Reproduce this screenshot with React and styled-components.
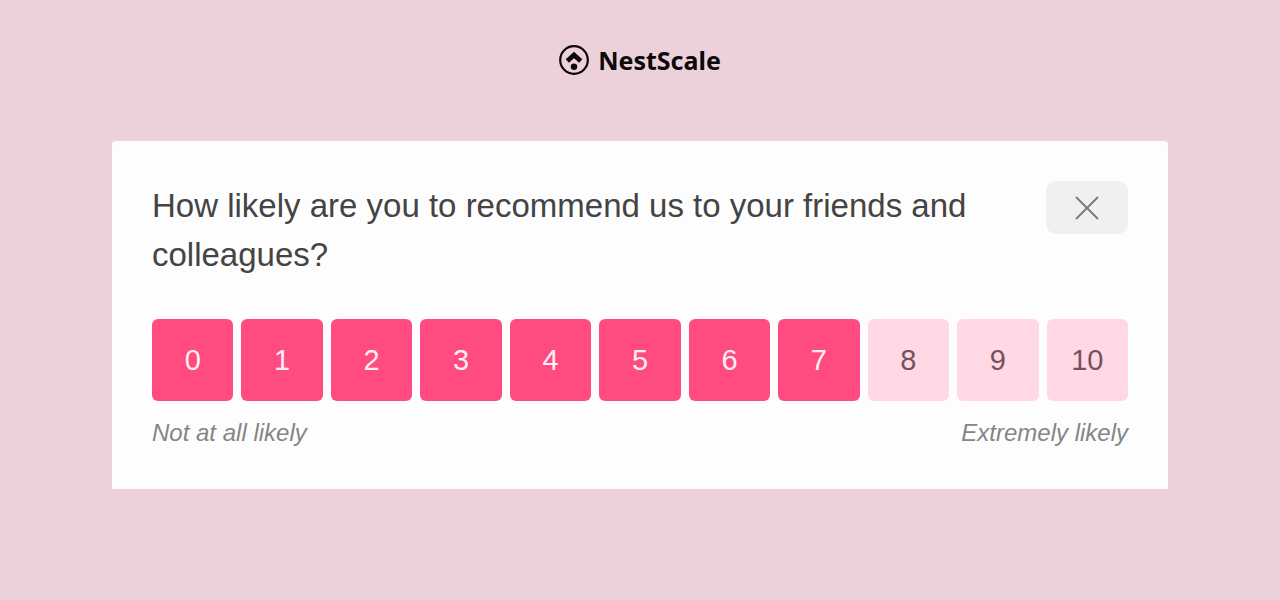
import React, { useState } from 'react';
import styled, { createGlobalStyle } from 'styled-components';

const scores = [0, 1, 2, 3, 4, 5, 6, 7, 8, 9, 10];

const App = () => {
  const [score, setScore] = useState(7);
  const [open, setOpen] = useState(true);

  return (
    <>
      <GlobalStyle />
      <Page>
        <Brand>
          <BrandMark viewBox="0 0 30 30" aria-hidden="true">
            <circle cx="15" cy="15" r="13.8" fill="none" stroke="#0b090a" strokeWidth="2.2" />
            <path
              d="M8.3 16 L15 10 L21.7 16"
              fill="none"
              stroke="#0b090a"
              strokeWidth="4.8"
            />
            <circle cx="15" cy="21.7" r="3.2" fill="#0b090a" />
          </BrandMark>
          <BrandName>NestScale</BrandName>
        </Brand>
        {open && (
          <Card>
            <CardHeader>
              <Question>
                How likely are you to recommend us to your friends and colleagues?
              </Question>
              <CloseButton type="button" aria-label="Close" onClick={() => setOpen(false)}>
                <CloseIcon viewBox="0 0 24 24" aria-hidden="true">
                  <path d="M1 1 L23 23 M23 1 L1 23" />
                </CloseIcon>
              </CloseButton>
            </CardHeader>
            <Scale>
              {scores.map((value) => (
                <ScoreButton
                  key={value}
                  type="button"
                  $filled={value <= score}
                  aria-pressed={value === score}
                  onClick={() => setScore(value)}
                >
                  {value}
                </ScoreButton>
              ))}
            </Scale>
            <Legend>
              <span>Not at all likely</span>
              <span>Extremely likely</span>
            </Legend>
          </Card>
        )}
      </Page>
    </>
  );
};

export default App;

const GlobalStyle = createGlobalStyle`
  * {
    box-sizing: border-box;
  }

  body {
    margin: 0;
    background: #edd1da;
    font-family: 'Liberation Sans', Arial, sans-serif;
  }
`;

const Page = styled.main`
  display: flex;
  flex-direction: column;
  align-items: center;
  min-height: 100vh;
  padding: 40px 24px;
`;

const Brand = styled.header`
  display: flex;
  align-items: center;
  gap: 9px;
  height: 40px;
  margin-bottom: 61px;
`;

const BrandMark = styled.svg`
  width: 30px;
  height: 30px;
`;

const BrandName = styled.span`
  color: #0b090a;
  font-family: 'Noto Sans', sans-serif;
  font-size: 25px;
  font-weight: 700;
  line-height: 40px;
`;

const Card = styled.section`
  width: 100%;
  max-width: 1056px;
  padding: 40px;
  background: #fdfdfd;
  border-radius: 4px 4px 0 0;
`;

const CardHeader = styled.div`
  display: flex;
  align-items: flex-start;
  justify-content: space-between;
  gap: 40px;
  margin-bottom: 40px;
`;

const Question = styled.h1`
  margin: 0;
  color: #444;
  font-size: 33px;
  font-weight: 400;
  line-height: 49px;
`;

const CloseButton = styled.button`
  display: flex;
  flex-shrink: 0;
  align-items: center;
  justify-content: center;
  width: 82px;
  height: 53px;
  padding: 0;
  border: none;
  border-radius: 10px;
  background: #f0f0f0;
  cursor: pointer;
`;

const CloseIcon = styled.svg`
  width: 24px;
  height: 24px;
  fill: none;
  stroke: #7b7b7b;
  stroke-width: 2;
`;

const Scale = styled.div`
  display: grid;
  grid-template-columns: repeat(11, 1fr);
  gap: 8px;
`;

const ScoreButton = styled.button`
  height: 82px;
  padding: 0;
  border: none;
  border-radius: 6px;
  background: ${({ $filled }) => ($filled ? '#ff4b80' : '#ffd8e4')};
  color: ${({ $filled }) => ($filled ? '#ffeff4' : '#755260')};
  font-family: inherit;
  font-size: 29px;
  cursor: pointer;
`;

const Legend = styled.div`
  display: flex;
  justify-content: space-between;
  margin-top: 16px;
  color: #858585;
  font-size: 24px;
  font-style: italic;
  line-height: 32px;
`;
